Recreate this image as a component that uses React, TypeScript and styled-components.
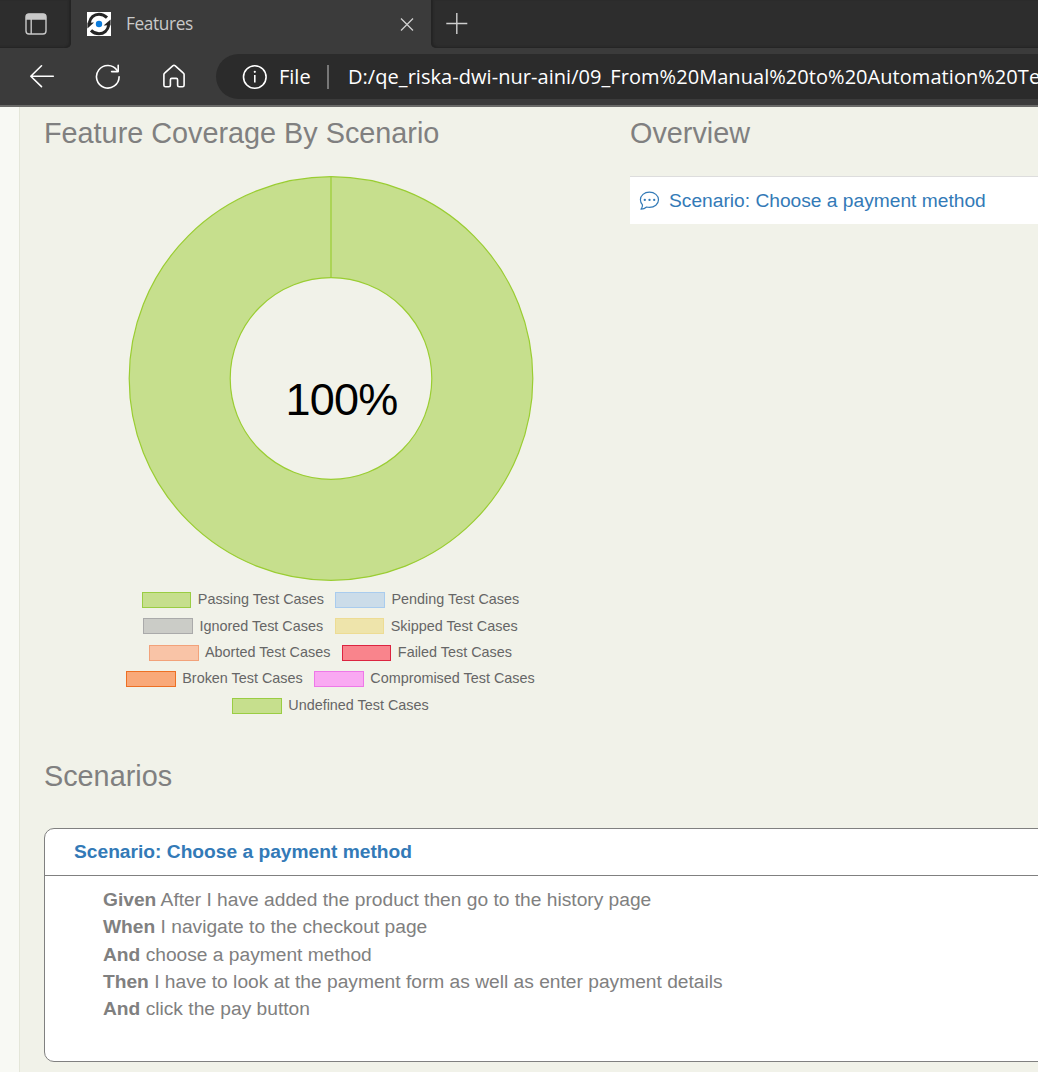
import React from 'react';
import styled, { createGlobalStyle } from 'styled-components';

const GlobalStyle = createGlobalStyle`
  * { box-sizing: border-box; }
  body {
    margin: 0;
    overflow: hidden;
    background: #f1f2e9;
    font-family: 'Liberation Sans', Arial, sans-serif;
  }
  svg { flex: none; }
`;

const Window = styled.div`
  display: flex;
  flex-direction: column;
  width: 100%;
  height: 1072px;
  overflow: hidden;
`;

const TabStrip = styled.div`
  display: flex;
  height: 48px;
  flex: none;
  background: #3b3b3b;
  font-family: 'Open Sans', 'Noto Sans', sans-serif;
`;

const StripStart = styled.div`
  display: flex;
  align-items: center;
  width: 71px;
  padding-left: 25px;
  background: #2d2d2d;
  border-bottom-right-radius: 5px;
  box-shadow: inset -2px -1px 2px #242424;
`;

const Tab = styled.div`
  display: flex;
  align-items: center;
  width: 360px;
  padding: 0 17px 0 16px;
  background: #3b3b3b;
`;

const TabTitle = styled.span`
  flex: 1;
  margin-left: 15px;
  font-size: 17.3px;
  line-height: 24px;
  letter-spacing: -0.4px;
  color: #c9c9c9;
`;

const StripEnd = styled.div`
  display: flex;
  flex: 1;
  align-items: center;
  padding-left: 15px;
  background: #2d2d2d;
  border-bottom-left-radius: 5px;
  box-shadow: inset 2px -1px 2px #242424;
`;

const Toolbar = styled.div`
  display: flex;
  align-items: center;
  flex: none;
  height: 59px;
  padding-left: 28px;
  background: #3b3b3b;
  border-bottom: 2px solid #6a6a68;
  font-family: 'Open Sans', 'Noto Sans', sans-serif;
`;

const NavButtons = styled.div`
  display: flex;
  gap: 38px;
  width: 188px;
  flex: none;
`;

const AddressBar = styled.div`
  display: flex;
  align-items: center;
  flex: 1;
  min-width: 0;
  height: 45px;
  padding-left: 25px;
  overflow: hidden;
  border-radius: 23px 0 0 23px;
  background: #2b2b2b;
  color: #fff;
  white-space: nowrap;
`;

const Protocol = styled.span`
  flex: none;
  width: 48px;
  margin-left: 12px;
  font-size: 20px;
  line-height: 28px;
`;

const Divider = styled.span`
  flex: none;
  width: 2px;
  height: 24px;
  margin-right: 19px;
  background: #777;
`;

const Url = styled.span`
  font-size: 20px;
  line-height: 28px;
  letter-spacing: 0.05px;
`;

const Page = styled.main`
  display: flex;
  flex: 1;
  min-height: 0;
`;

const Gutter = styled.div`
  width: 20px;
  flex: none;
  background: #f8f9f4;
  border-right: 1px solid #e4e6d9;
`;

const Content = styled.div`
  flex: 1;
  min-width: 0;
  padding: 10px 0 0 24px;
`;

const Columns = styled.div`
  display: flex;
  height: 643px;
`;

const ChartColumn = styled.section`
  width: 586px;
  flex: none;
`;

const OverviewColumn = styled.section`
  flex: 1;
  min-width: 0;
`;

const Heading = styled.h3`
  margin: 0;
  font-size: 28.8px;
  font-weight: 400;
  line-height: 32px;
  color: #808080;
  white-space: nowrap;
`;

const ChartSvg = styled.svg`
  display: block;
  margin: 26px 0 0 83px;
`;

const Legend = styled.div`
  display: flex;
  flex-direction: column;
  width: 573px;
  margin-top: 4px;
`;

const LegendRow = styled.div`
  display: flex;
  justify-content: center;
  gap: 11.5px;
  height: 26.4px;
`;

const LegendItem = styled.div`
  display: flex;
  align-items: center;
  gap: 6.5px;
  height: 26.4px;
  font-size: 14.4px;
  line-height: 26px;
  color: #666;
  white-space: nowrap;
`;

const Swatch = styled.span<{ $fill: string; $line: string }>`
  width: 49.5px;
  height: 16px;
  margin-top: 1.5px;
  background: ${(p) => p.$fill};
  border: 1px solid ${(p) => p.$line};
`;

const OverviewItem = styled.a`
  display: flex;
  align-items: center;
  height: 48px;
  margin-top: 27px;
  padding-left: 9px;
  background: #fff;
  border-top: 1px solid #ddd;
  color: #337ab7;
  font-size: 19.2px;
  line-height: 27px;
  gap: 9px;
  white-space: nowrap;
`;

const Card = styled.section`
  width: 1100px;
  height: 234px;
  margin-top: 36px;
  background: #fff;
  border: 1px solid #808080;
  border-radius: 10px;
`;

const CardTitle = styled.div`
  height: 47px;
  padding: 9px 0 0 29px;
  border-bottom: 1px solid #808080;
  color: #337ab7;
  font-size: 19.2px;
  font-weight: 700;
  line-height: 27px;
`;

const Steps = styled.div`
  padding: 10px 0 0 58px;
`;

const Step = styled.div`
  font-size: 19.2px;
  line-height: 27.3px;
  color: #808080;
  white-space: nowrap;
`;

type Series = { label: string; fill: string; line: string };

const legendRows: Series[][] = [
  [
    { label: 'Passing Test Cases', fill: '#c6df8d', line: '#9acd43' },
    { label: 'Pending Test Cases', fill: '#cbdce9', line: '#a9ccee' },
  ],
  [
    { label: 'Ignored Test Cases', fill: '#cbccc7', line: '#aaaaaa' },
    { label: 'Skipped Test Cases', fill: '#eee4ab', line: '#eddc94' },
  ],
  [
    { label: 'Aborted Test Cases', fill: '#f9c4a7', line: '#f2a27a' },
    { label: 'Failed Test Cases', fill: '#f9848c', line: '#dc2440' },
  ],
  [
    { label: 'Broken Test Cases', fill: '#f9a979', line: '#ed7024' },
    { label: 'Compromised Test Cases', fill: '#f9a9f2', line: '#ee78e8' },
  ],
  [{ label: 'Undefined Test Cases', fill: '#c6df8d', line: '#9acd43' }],
];

const steps: [string, string][] = [
  ['Given', 'After I have added the product then go to the history page'],
  ['When', 'I navigate to the checkout page'],
  ['And', 'choose a payment method'],
  ['Then', 'I have to look at the payment form as well as enter payment details'],
  ['And', 'click the pay button'],
];

const SidebarIcon = () => (
  <svg width="22" height="22" viewBox="0 0 22 22" fill="none" stroke="#c8c8c8" strokeWidth="1.4">
    <rect x="1" y="1" width="20" height="20" rx="3" />
    <path d="M1.5 6V4Q1.5 1.5 4 1.5H18Q20.5 1.5 20.5 4V6Z" fill="#c8c8c8" />
    <path d="M6.2 6V21" />
  </svg>
);

const Favicon = () => (
  <svg width="24" height="24" viewBox="0 0 24 24">
    <rect width="24" height="24" fill="#fff" />
    <g fill="none" stroke="#252525" strokeWidth="3">
      <path d="M2.2 11C3.3 5.3 7.3 2.2 12 2.2Q16.6 2.2 20 5.6" />
      <path d="M21.8 13C20.7 18.7 16.7 21.8 12 21.8Q7.4 21.8 4 18.4" />
    </g>
    <path d="M0.4 10.8L7 10.4L0.4 16.6Z M23.6 13.2L16.6 13.6L23.6 7.4Z" fill="#252525" />
    <circle cx="12" cy="12" r="3.2" fill="#0b7bdc" />
  </svg>
);

const CloseIcon = () => (
  <svg width="14" height="14" viewBox="0 0 14 14" stroke="#d0d0d0" strokeWidth="1.3">
    <path d="M1 1.5L13 13.5M13 1.5L1 13.5" />
  </svg>
);

const PlusIcon = () => (
  <svg width="22" height="22" viewBox="0 0 22 22" stroke="#cfcfcf" strokeWidth="1.4">
    <path d="M10.8 0V21M0.3 10.5H21.3" />
  </svg>
);

const BackIcon = () => (
  <svg width="28" height="26" viewBox="0 0 28 26" fill="none" stroke="#fff" strokeWidth="1.6" strokeLinecap="round" strokeLinejoin="round">
    <path d="M25.3 12.2H2.8M13.5 1.8L2.8 12.2L13.5 22.6" />
  </svg>
);

const ReloadIcon = () => (
  <svg width="28" height="26" viewBox="0 0 28 26" fill="none" stroke="#fff" strokeWidth="1.6" strokeLinecap="round" strokeLinejoin="round">
    <path d="M25.1 12.8A11.3 11.3 0 1 1 23.2 6.5" />
    <path d="M24.2 1.3V7.6H17.6" />
  </svg>
);

const HomeIcon = () => (
  <svg width="28" height="26" viewBox="0 0 28 26" fill="none" stroke="#fff" strokeWidth="1.6" strokeLinejoin="round">
    <path transform="translate(0 -0.6)" d="M3.9 11.2Q3.9 10.3 4.6 9.7L12.7 2.4Q14 1.4 15.3 2.4L23.4 9.7Q24.1 10.3 24.1 11.2V21.8Q24.1 23.3 22.5 23.3H19.2Q17.6 23.3 17.6 21.8V16.3Q17.6 15 16.3 15H11.7Q10.4 15 10.4 16.3V21.8Q10.4 23.3 8.8 23.3H5.5Q3.9 23.3 3.9 21.8Z" />
  </svg>
);

const InfoIcon = () => (
  <svg width="26" height="26" viewBox="0 0 26 26" fill="none" stroke="#fff" strokeWidth="1.6">
    <circle cx="13.8" cy="13" r="11.3" />
    <path d="M13.8 11V18.5" />
    <circle cx="13.8" cy="7.8" r="1.1" fill="#fff" stroke="none" />
  </svg>
);

const CommentIcon = () => (
  <svg width="21" height="20" viewBox="0 0 21 20" fill="none" stroke="#337ab7" strokeWidth="1.2">
    <path d="M10.4 1.2C15.5 1.2 19.5 4.5 19.5 8.8S15.5 16.3 10.4 16.3Q9 16.3 7.6 16Q5.2 18 2 18.2Q3.6 16.6 3.5 13.8Q1.4 11.7 1.4 8.8C1.4 4.5 5.3 1.2 10.4 1.2Z" strokeLinejoin="round" />
    <g fill="#337ab7" stroke="none">
      <circle cx="5.8" cy="8.9" r="1.15" />
      <circle cx="10.5" cy="8.9" r="1.15" />
      <circle cx="15.2" cy="8.9" r="1.15" />
    </g>
  </svg>
);

const Donut = () => (
  <ChartSvg width="408" height="407" viewBox="0 0 408 407">
    <circle cx="204" cy="203.5" r="151.3" fill="none" stroke="#c6df8d" strokeWidth="101" />
    <g fill="none" stroke="#9acd32" strokeWidth="1.2">
      <circle cx="204" cy="203.5" r="201.8" />
      <circle cx="204" cy="203.5" r="100.8" />
      <path d="M204 1.7V102.7" />
    </g>
    <text x="158.5" y="240" fontSize="45" letterSpacing="-0.8" fill="#000">100%</text>
  </ChartSvg>
);

export default function App() {
  return (
    <Window>
      <GlobalStyle />
      <TabStrip>
        <StripStart>
          <SidebarIcon />
        </StripStart>
        <Tab>
          <Favicon />
          <TabTitle>Features</TabTitle>
          <CloseIcon />
        </Tab>
        <StripEnd>
          <PlusIcon />
        </StripEnd>
      </TabStrip>
      <Toolbar>
        <NavButtons>
          <BackIcon />
          <ReloadIcon />
          <HomeIcon />
        </NavButtons>
        <AddressBar>
          <InfoIcon />
          <Protocol>File</Protocol>
          <Divider />
          <Url>D:/qe_riska-dwi-nur-aini/09_From%20Manual%20to%20Automation%20Tes</Url>
        </AddressBar>
      </Toolbar>
      <Page>
        <Gutter />
        <Content>
          <Columns>
            <ChartColumn>
              <Heading>Feature Coverage By Scenario</Heading>
              <Donut />
              <Legend>
                {legendRows.map((row) => (
                  <LegendRow key={row[0].label}>
                    {row.map((item) => (
                      <LegendItem key={item.label}>
                        <Swatch $fill={item.fill} $line={item.line} />
                        {item.label}
                      </LegendItem>
                    ))}
                  </LegendRow>
                ))}
              </Legend>
            </ChartColumn>
            <OverviewColumn>
              <Heading>Overview</Heading>
              <OverviewItem>
                <CommentIcon />
                Scenario: Choose a payment method
              </OverviewItem>
            </OverviewColumn>
          </Columns>
          <Heading>Scenarios</Heading>
          <Card>
            <CardTitle>Scenario: Choose a payment method</CardTitle>
            <Steps>
              {steps.map(([keyword, text]) => (
                <Step key={text}>
                  <b>{keyword}</b> {text}
                </Step>
              ))}
            </Steps>
          </Card>
        </Content>
      </Page>
    </Window>
  );
}
